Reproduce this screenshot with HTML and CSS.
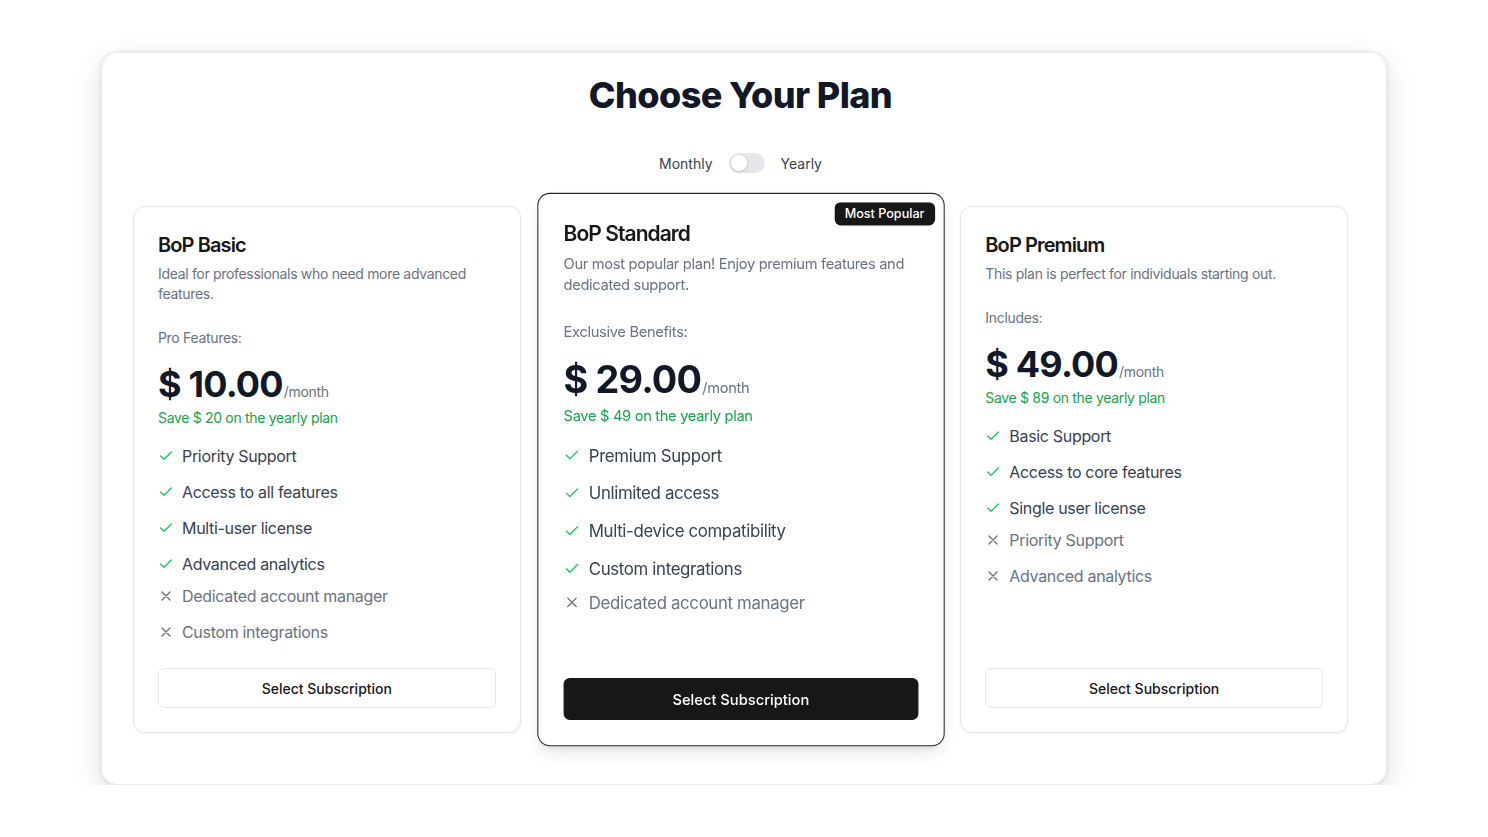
FILE: index.html
```html
<!DOCTYPE html>
<html lang="en">
<head>
<meta charset="utf-8">
<title>Choose Your Plan</title>
<link rel="stylesheet" href="styles.css">
</head>
<body>
<div class="panel">
  <h1 class="title">Choose Your Plan</h1>
  <div class="toggle-row">
    <span>Monthly</span>
    <span class="switch"><span class="thumb"></span></span>
    <span>Yearly</span>
  </div>
  <div class="plans">
    <div class="card">
      <h2 class="plan-name">BoP Basic</h2>
      <p class="plan-desc">Ideal for professionals who need more advanced features.</p>
      <p class="plan-label">Pro Features:</p>
      <div class="price"><span class="amount">$ 10.00</span><span class="per">/month</span></div>
      <p class="save">Save $ 20 on the yearly plan</p>
      <ul class="list">
        <li class="yes"><svg viewBox="0 0 24 24"><path d="M20 6 9 17l-5-5"/></svg>Priority Support</li>
        <li class="yes"><svg viewBox="0 0 24 24"><path d="M20 6 9 17l-5-5"/></svg>Access to all features</li>
        <li class="yes"><svg viewBox="0 0 24 24"><path d="M20 6 9 17l-5-5"/></svg>Multi-user license</li>
        <li class="yes"><svg viewBox="0 0 24 24"><path d="M20 6 9 17l-5-5"/></svg>Advanced analytics</li>
      </ul>
      <ul class="list excluded">
        <li class="no"><svg viewBox="0 0 24 24"><path d="M18 6 6 18M6 6l12 12"/></svg>Dedicated account manager</li>
        <li class="no"><svg viewBox="0 0 24 24"><path d="M18 6 6 18M6 6l12 12"/></svg>Custom integrations</li>
      </ul>
      <button class="btn">Select Subscription</button>
    </div>
    <div class="card featured">
      <span class="badge">Most Popular</span>
      <h2 class="plan-name">BoP Standard</h2>
      <p class="plan-desc">Our most popular plan! Enjoy premium features and dedicated support.</p>
      <p class="plan-label">Exclusive Benefits:</p>
      <div class="price"><span class="amount">$ 29.00</span><span class="per">/month</span></div>
      <p class="save">Save $ 49 on the yearly plan</p>
      <ul class="list">
        <li class="yes"><svg viewBox="0 0 24 24"><path d="M20 6 9 17l-5-5"/></svg>Premium Support</li>
        <li class="yes"><svg viewBox="0 0 24 24"><path d="M20 6 9 17l-5-5"/></svg>Unlimited access</li>
        <li class="yes"><svg viewBox="0 0 24 24"><path d="M20 6 9 17l-5-5"/></svg>Multi-device compatibility</li>
        <li class="yes"><svg viewBox="0 0 24 24"><path d="M20 6 9 17l-5-5"/></svg>Custom integrations</li>
      </ul>
      <ul class="list excluded">
        <li class="no"><svg viewBox="0 0 24 24"><path d="M18 6 6 18M6 6l12 12"/></svg>Dedicated account manager</li>
      </ul>
      <button class="btn btn-dark">Select Subscription</button>
    </div>
    <div class="card">
      <h2 class="plan-name">BoP Premium</h2>
      <p class="plan-desc">This plan is perfect for individuals starting out.</p>
      <p class="plan-label">Includes:</p>
      <div class="price"><span class="amount">$ 49.00</span><span class="per">/month</span></div>
      <p class="save">Save $ 89 on the yearly plan</p>
      <ul class="list">
        <li class="yes"><svg viewBox="0 0 24 24"><path d="M20 6 9 17l-5-5"/></svg>Basic Support</li>
        <li class="yes"><svg viewBox="0 0 24 24"><path d="M20 6 9 17l-5-5"/></svg>Access to core features</li>
        <li class="yes"><svg viewBox="0 0 24 24"><path d="M20 6 9 17l-5-5"/></svg>Single user license</li>
      </ul>
      <ul class="list excluded">
        <li class="no"><svg viewBox="0 0 24 24"><path d="M18 6 6 18M6 6l12 12"/></svg>Priority Support</li>
        <li class="no"><svg viewBox="0 0 24 24"><path d="M18 6 6 18M6 6l12 12"/></svg>Advanced analytics</li>
      </ul>
      <button class="btn">Select Subscription</button>
    </div>
  </div>
</div>
</body>
</html>
```
FILE: styles.css
```css
* { box-sizing: border-box; }
html, body { margin: 0; padding: 0; background: #ffffff; }
body {
  font-family: Inter, "Noto Sans", "Liberation Sans", sans-serif;
  color: #111827;
  letter-spacing: -0.02em;
  padding-top: 52px;
  padding-left: 101px;
}
.panel {
  width: 1286px;
  height: 733px;
  background: #fff;
  border: 1px solid #ececec;
  border-radius: 16px;
  padding: 22px 38px 0 31px;
  box-shadow: 0 0 4px rgba(0,0,0,0.10), 0 10px 28px rgba(0,0,0,0.13);
}
.title {
  margin: 0;
  font-size: 36px;
  line-height: 40px;
  font-weight: 800;
  text-align: center;
  color: #111827;
  letter-spacing: -0.6px;
}
.toggle-row {
  margin-top: 36px;
  height: 24px;
  display: flex;
  align-items: center;
  justify-content: center;
  gap: 16px;
  font-size: 14px;
  color: #374151;
  letter-spacing: 0;
}
.switch {
  width: 36px;
  height: 20px;
  border-radius: 10px;
  background: #e5e7eb;
  display: flex;
  align-items: center;
  padding: 2px;
}
.thumb {
  width: 16px;
  height: 16px;
  border-radius: 50%;
  background: #fff;
  box-shadow: 0 1px 3px rgba(0,0,0,0.2);
}
.plans {
  margin-top: 31px;
  display: grid;
  grid-template-columns: repeat(3, 1fr);
  gap: 26px;
  height: 527px;
}
.card {
  position: relative;
  display: flex;
  flex-direction: column;
  border: 1px solid #e5e7eb;
  border-radius: 12px;
  background: #fff;
  padding: 24px;
  box-shadow: 0 1px 3px rgba(0,0,0,0.06);
}
.card.featured {
  border-color: #2a2a2a;
  transform: scale(1.05);
  z-index: 1;
  box-shadow: 0 8px 16px -4px rgba(0,0,0,0.12), 0 3px 6px -2px rgba(0,0,0,0.06);
}
.badge {
  position: absolute;
  top: 8px;
  right: 8px;
  background: #171717;
  color: #fff;
  font-size: 12px;
  line-height: 16px;
  font-weight: 500;
  padding: 3px 10px;
  border-radius: 6px;
  letter-spacing: 0;
}
.plan-name {
  margin: 0;
  font-size: 20px;
  line-height: 28px;
  font-weight: 600;
  color: #171717;
  letter-spacing: -0.9px;
}
.plan-desc {
  margin: 5px 0 0;
  font-size: 14px;
  line-height: 20px;
  color: #6b7280;
}
.plan-label {
  margin: 24px 0 0;
  font-size: 14px;
  line-height: 20px;
  color: #6b7280;
}
.price {
  margin-top: 16px;
  height: 40px;
  display: flex;
  align-items: baseline;
}
.amount {
  font-size: 36px;
  line-height: 40px;
  font-weight: 700;
  color: #111827;
  letter-spacing: -0.8px;
}
.per {
  font-size: 14px;
  line-height: 20px;
  color: #6b7280;
  margin-left: 1px;
}
.save {
  margin: 4px 0 0;
  font-size: 14px;
  line-height: 20px;
  color: #16a34a;
}
.list {
  list-style: none;
  margin: 16px 0 0;
  padding: 0;
  display: flex;
  flex-direction: column;
  gap: 12px;
}
.list.excluded { margin-top: 8px; }
.list li {
  display: flex;
  align-items: center;
  gap: 8px;
  font-size: 16px;
  line-height: 24px;
}
.list svg {
  width: 16px;
  height: 16px;
  flex: none;
  fill: none;
  stroke-width: 2;
  stroke-linecap: round;
  stroke-linejoin: round;
}
.yes { color: #374151; }
.yes svg { stroke: #22c55e; }
.no { color: #6b7280; }
.no svg { stroke: #6b7280; }
.btn {
  margin-top: auto;
  height: 40px;
  width: 100%;
  border: 1px solid #e5e7eb;
  border-radius: 6px;
  background: #fff;
  font-family: inherit;
  font-size: 14px;
  font-weight: 500;
  color: #171717;
  letter-spacing: 0;
}
.btn-dark {
  background: #171717;
  border-color: #171717;
  color: #fff;
}
```
